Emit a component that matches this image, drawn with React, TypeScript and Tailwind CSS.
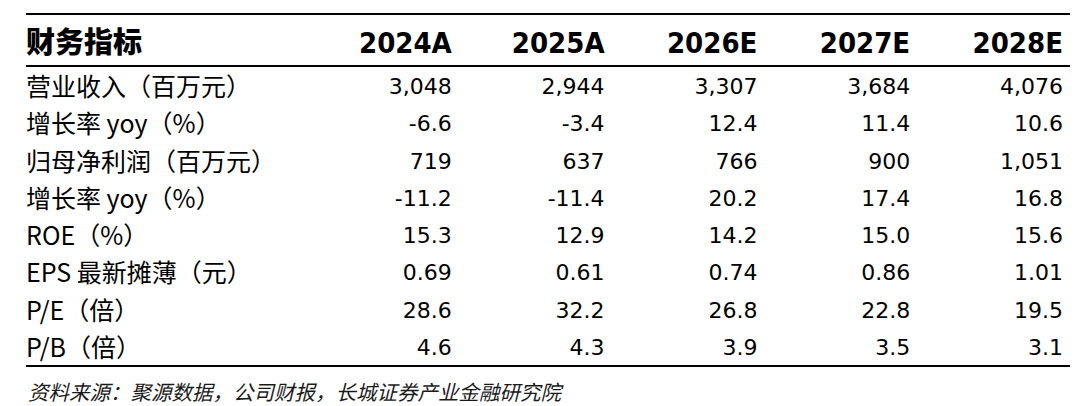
import React from "react";

const years = ["2024A", "2025A", "2026E", "2027E", "2028E"];

const rows: { label: string; values: string[] }[] = [
  { label: "营业收入（百万元）", values: ["3,048", "2,944", "3,307", "3,684", "4,076"] },
  { label: "增长率 yoy（%）", values: ["-6.6", "-3.4", "12.4", "11.4", "10.6"] },
  { label: "归母净利润（百万元）", values: ["719", "637", "766", "900", "1,051"] },
  { label: "增长率 yoy（%）", values: ["-11.2", "-11.4", "20.2", "17.4", "16.8"] },
  { label: "ROE（%）", values: ["15.3", "12.9", "14.2", "15.0", "15.6"] },
  { label: "EPS 最新摊薄（元）", values: ["0.69", "0.61", "0.74", "0.86", "1.01"] },
  { label: "P/E（倍）", values: ["28.6", "32.2", "26.8", "22.8", "19.5"] },
  { label: "P/B（倍）", values: ["4.6", "4.3", "3.9", "3.5", "3.1"] },
];

export default function App() {
  return (
    <div className="w-[1078px] h-[406px] bg-white text-black overflow-hidden">
      <div className="ml-[26px] mt-[13px] w-[1044px]">
        <div className="border-t-2 border-b-2 border-black h-[54px] grid grid-cols-[273px_repeat(5,1fr)] pr-[7px] items-center">
          <div className="font-['Noto_Sans_CJK_SC',sans-serif] font-black text-[29px] leading-none">
            财务指标
          </div>
          {years.map((y) => (
            <div
              key={y}
              className="text-right font-['DejaVu_Sans_Condensed','DejaVu_Sans',sans-serif] font-bold text-[29px] leading-none [font-stretch:condensed] pt-[6px]"
            >
              {y}
            </div>
          ))}
        </div>
        <div className="border-b-2 border-black">
          {rows.map((r, i) => (
            <div
              key={i}
              className="h-[37.25px] grid grid-cols-[273px_repeat(5,1fr)] pr-[7px] items-center"
            >
              <div className="font-['Noto_Sans_CJK_SC',sans-serif] text-[25px] leading-none whitespace-nowrap">
                {r.label}
              </div>
              {r.values.map((v, j) => (
                <div
                  key={j}
                  className="text-right font-['DejaVu_Sans',sans-serif] text-[22px] leading-none pt-[3px]"
                >
                  {v}
                </div>
              ))}
            </div>
          ))}
        </div>
        <div className="mt-[14px] pl-[2px] font-['Noto_Sans_CJK_SC',sans-serif] italic text-[20.5px] leading-none text-[#1a1a1a]">
          资料来源：聚源数据，公司财报，长城证券产业金融研究院
        </div>
      </div>
    </div>
  );
}
